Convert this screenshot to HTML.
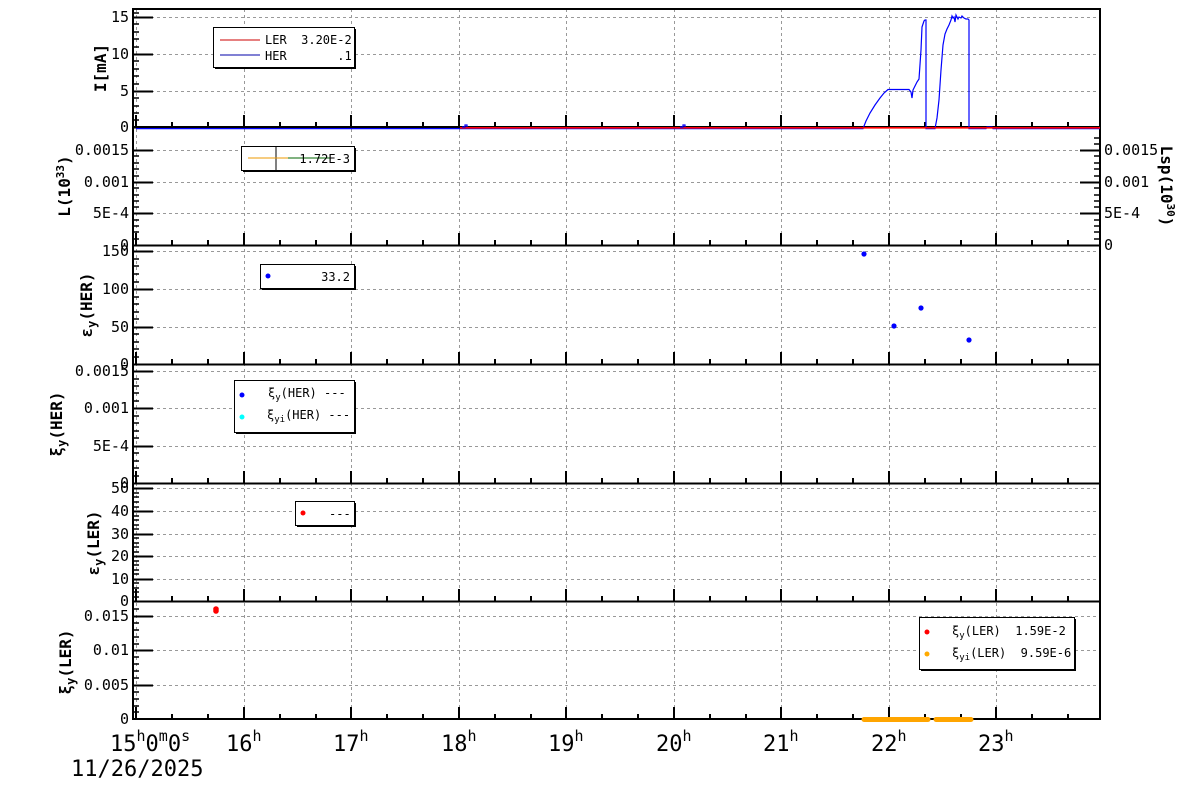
<!DOCTYPE html>
<html><head><meta charset="utf-8"><style>
html,body{margin:0;padding:0;background:#fff;width:1200px;height:798px;overflow:hidden}
text{font-family:"DejaVu Sans Mono","Liberation Mono",monospace;fill:#000}
</style></head><body>
<svg width="1200" height="798" viewBox="0 0 1200 798" xmlns="http://www.w3.org/2000/svg">
<g stroke="#999" stroke-width="1" stroke-dasharray="3,3" fill="none">
<path d="M136.5 9V719M244.5 9V719M351.5 9V719M459.5 9V719M566.5 9V719M674.5 9V719M781.5 9V719M889.5 9V719M996.5 9V719"/>
<path d="M133 17.5H1100M133 54.5H1100M133 91.5H1100
M133 150.5H1100M133 182.5H1100M133 213.5H1100
M133 251.5H1100M133 289.5H1100M133 327.5H1100
M133 371.5H1100M133 408.5H1100M133 446.5H1100
M133 488.5H1100M133 511.5H1100M133 534.5H1100M133 556.5H1100M133 579.5H1100
M133 616.5H1100M133 650.5H1100M133 685.5H1100"/>
</g>
<defs>
<path id="tk" stroke="#000" stroke-width="2" fill="none" d="M136 0v-12M244 0v-12M351 0v-12M459 0v-12M566 0v-12M674 0v-12M781 0v-12M889 0v-12M996 0v-12
M172 0v-5M208 0v-5M280 0v-5M316 0v-5M387 0v-5M423 0v-5M495 0v-5M531 0v-5M602 0v-5M638 0v-5M710 0v-5M746 0v-5M817 0v-5M853 0v-5M925 0v-5M961 0v-5M1032 0v-5M1068 0v-5"/>
</defs>
<use href="#tk" y="127"/><use href="#tk" y="245"/><use href="#tk" y="364"/><use href="#tk" y="483"/><use href="#tk" y="601"/><use href="#tk" y="719"/>
<g stroke="#000" stroke-width="2">
<path d="M133 17.5h20M133 54.5h20M133 91.5h20M133 127.5h20"/>
<path d="M133 150.5h20M133 182.5h20M133 213.5h20M1100 150.5h-20M1100 182.5h-20M1100 213.5h-20"/>
<path d="M133 251.5h20M133 289.5h20M133 327.5h20"/>
<path d="M133 371.5h20M133 408.5h20M133 446.5h20"/>
<path d="M133 488.5h20M133 511.5h20M133 534.5h20M133 556.5h20M133 579.5h20"/>
<path d="M133 616.5h20M133 650.5h20M133 685.5h20"/>
</g>
<g stroke="#000" stroke-width="1.5">
<path d="M133 24h6M133 32h6M133 39h6M133 47h6M133 61h6M133 69h6M133 76h6M133 84h6M133 98h6M133 106h6M133 113h6M133 120h6M133 13h6
M133 156h6M133 163h6M133 169h6M133 176h6M133 188h6M133 195h6M133 201h6M133 207h6M133 220h6M133 226h6M133 232h6M133 239h6
M1100 156h-6M1100 163h-6M1100 169h-6M1100 176h-6M1100 188h-6M1100 195h-6M1100 201h-6M1100 207h-6M1100 220h-6M1100 226h-6M1100 232h-6M1100 239h-6M1100 144h-6M1100 138h-6
M133 259h6M133 266h6M133 274h6M133 282h6M133 297h6M133 304h6M133 312h6M133 319h6M133 334h6M133 342h6M133 349h6M133 357h6
M133 379h6M133 386h6M133 393h6M133 401h6M133 416h6M133 423h6M133 431h6M133 438h6M133 453h6M133 461h6M133 468h6M133 476h6
M133 493h6M133 497h6M133 502h6M133 507h6M133 516h6M133 520h6M133 525h6M133 529h6M133 538h6M133 543h6M133 547h6M133 552h6M133 561h6M133 565h6M133 570h6M133 574h6M133 583h6M133 588h6M133 592h6M133 597h6
M133 609h6M133 623h6M133 630h6M133 637h6M133 644h6M133 657h6M133 664h6M133 671h6M133 678h6M133 692h6M133 699h6M133 706h6M133 712h6"/>
</g>
<g fill="#00f"><circle cx="864" cy="254" r="2.6"/><circle cx="894" cy="326" r="2.6"/><circle cx="921" cy="308" r="2.6"/><circle cx="969" cy="340" r="2.6"/></g>
<circle cx="216" cy="609" r="2.8" fill="#f00"/><circle cx="216" cy="611" r="2.8" fill="#f00"/>
<g stroke="#000" stroke-width="2" fill="none">
<rect x="133" y="9" width="967" height="710"/>
<path d="M133 127H1100M133 245.5H1100M133 364.5H1100M133 483.5H1100M133 601.5H1100"/>
</g>
<path d="M136 128.6H863L866 121L870 113L875 105L880 98L884 93L888 89.5H909L911 92L912 98L913 90L915 86L917 82L919 79L921 50L922 27L924 21L925 20L926 20L926 128.6H935L937 118L939 100L941 70L943 45L945 34L947 29L949 25L951 20L952 16L953 18L954 17L955 22L956 15L958 19L959 17L961 18L962 16L964 18L966 19L968 19L969 20L969 128.6H986L987 127H992L993 128.6H1100" stroke="#00f" stroke-width="1.2" fill="none"/>
<path d="M460 127.8H1100" stroke="#f00" stroke-width="1.6"/>
<path d="M462 127h3v-2h2v2M680 127h3v-2h2v2" stroke="#00f" stroke-width="1.2" fill="none"/>
<path d="M864 719.5H928M936 719.5H971" stroke="#ffa500" stroke-width="5" stroke-linecap="round"/>
<g stroke="#000" stroke-width="1" fill="#fff">
<rect x="215" y="29" width="141" height="40" fill="#000" stroke="none"/>
<rect x="213.5" y="27.5" width="141" height="40"/>
<rect x="243" y="148" width="113" height="24" fill="#000" stroke="none"/>
<rect x="241.5" y="146.5" width="113" height="24"/>
<rect x="262" y="266" width="94" height="24" fill="#000" stroke="none"/>
<rect x="260.5" y="264.5" width="94" height="24"/>
<rect x="236" y="382" width="120" height="52" fill="#000" stroke="none"/>
<rect x="234.5" y="380.5" width="120" height="52"/>
<rect x="297" y="503" width="59" height="24" fill="#000" stroke="none"/>
<rect x="295.5" y="501.5" width="59" height="24"/>
<rect x="921" y="619" width="155" height="52" fill="#000" stroke="none"/>
<rect x="919.5" y="617.5" width="155" height="52"/>
</g>
<path d="M220 40H260" stroke="#c00" stroke-width="1"/><path d="M220 55H260" stroke="#00a" stroke-width="1"/>
<path d="M276 147V170" stroke="#000"/><path d="M248 158H288" stroke="#e90"/><path d="M288 158H330" stroke="#060"/>
<circle cx="268" cy="276" r="2.5" fill="#00f"/>
<circle cx="242" cy="395" r="2.5" fill="#00f"/><circle cx="242" cy="417" r="2.5" fill="#0ff"/>
<circle cx="303" cy="513" r="2.5" fill="#f00"/>
<circle cx="927" cy="632" r="2.5" fill="#f00"/><circle cx="927" cy="654" r="2.5" fill="#fa0"/>
<g font-size="12">
<text x="265" y="44" xml:space="preserve">LER  3.20E-2</text>
<text x="265" y="60" xml:space="preserve">HER       .1</text>
<text x="350" y="163" text-anchor="end">1.72E-3</text>
<text x="350" y="281" text-anchor="end">33.2</text>
<text x="268" y="397" xml:space="preserve">ξ<tspan font-size="9" dy="3">y</tspan><tspan dy="-3">(HER) ---</tspan></text>
<text x="267" y="419" xml:space="preserve">ξ<tspan font-size="9" dy="3">yi</tspan><tspan dy="-3">(HER) ---</tspan></text>
<text x="329" y="518">---</text>
<text x="952" y="635" xml:space="preserve">ξ<tspan font-size="9" dy="3">y</tspan><tspan dy="-3">(LER)  1.59E-2</tspan></text>
<text x="952" y="657" xml:space="preserve">ξ<tspan font-size="9" dy="3">yi</tspan><tspan dy="-3">(LER)  9.59E-6</tspan></text>
</g>
<g font-size="15" text-anchor="end">
<text x="129" y="22">15</text><text x="129" y="59">10</text><text x="129" y="96">5</text><text x="129" y="132">0</text>
<text x="129" y="155">0.0015</text><text x="129" y="187">0.001</text><text x="129" y="218">5E-4</text><text x="129" y="250">0</text>
<text x="129" y="256">150</text><text x="129" y="294">100</text><text x="129" y="332">50</text><text x="129" y="369">0</text>
<text x="129" y="376">0.0015</text><text x="129" y="413">0.001</text><text x="129" y="451">5E-4</text><text x="129" y="488">0</text>
<text x="129" y="493">50</text><text x="129" y="516">40</text><text x="129" y="539">30</text><text x="129" y="561">20</text><text x="129" y="584">10</text><text x="129" y="606">0</text>
<text x="129" y="621">0.015</text><text x="129" y="655">0.01</text><text x="129" y="690">0.005</text><text x="129" y="724">0</text>
</g>
<g font-size="15">
<text x="1104" y="155">0.0015</text><text x="1104" y="187">0.001</text><text x="1104" y="218">5E-4</text><text x="1104" y="250">0</text>
</g>
<g font-size="16" font-weight="bold">
<text transform="translate(106,68) rotate(-90)" text-anchor="middle">I[mA]</text>
<text transform="translate(70,186) rotate(-90)" text-anchor="middle">L(10<tspan font-size="11" dy="-6">33</tspan><tspan dy="6">)</tspan></text>
<text transform="translate(92,305) rotate(-90)" text-anchor="middle">ε<tspan font-size="12" dy="4">y</tspan><tspan dy="-4">(HER)</tspan></text>
<text transform="translate(62,424) rotate(-90)" text-anchor="middle">ξ<tspan font-size="12" dy="4">y</tspan><tspan dy="-4">(HER)</tspan></text>
<text transform="translate(99,543) rotate(-90)" text-anchor="middle">ε<tspan font-size="12" dy="4">y</tspan><tspan dy="-4">(LER)</tspan></text>
<text transform="translate(71,662) rotate(-90)" text-anchor="middle">ξ<tspan font-size="12" dy="4">y</tspan><tspan dy="-4">(LER)</tspan></text>
<text transform="translate(1161,186) rotate(90)" text-anchor="middle">Lsp(10<tspan font-size="11" dy="-6">30</tspan><tspan dy="6">)</tspan></text>
</g>
<g font-size="22">
<text x="110" y="751">15<tspan font-size="15" dy="-10">h</tspan><tspan dy="10">0</tspan><tspan font-size="15" dy="-10">m</tspan><tspan dy="10">0</tspan><tspan font-size="15" dy="-10">s</tspan></text>
<text x="226" y="751">16<tspan font-size="15" dy="-10">h</tspan></text>
<text x="333" y="751">17<tspan font-size="15" dy="-10">h</tspan></text>
<text x="441" y="751">18<tspan font-size="15" dy="-10">h</tspan></text>
<text x="548" y="751">19<tspan font-size="15" dy="-10">h</tspan></text>
<text x="656" y="751">20<tspan font-size="15" dy="-10">h</tspan></text>
<text x="763" y="751">21<tspan font-size="15" dy="-10">h</tspan></text>
<text x="871" y="751">22<tspan font-size="15" dy="-10">h</tspan></text>
<text x="978" y="751">23<tspan font-size="15" dy="-10">h</tspan></text>
<text x="71" y="776">11/26/2025</text>
</g>
</svg>
</body></html>
